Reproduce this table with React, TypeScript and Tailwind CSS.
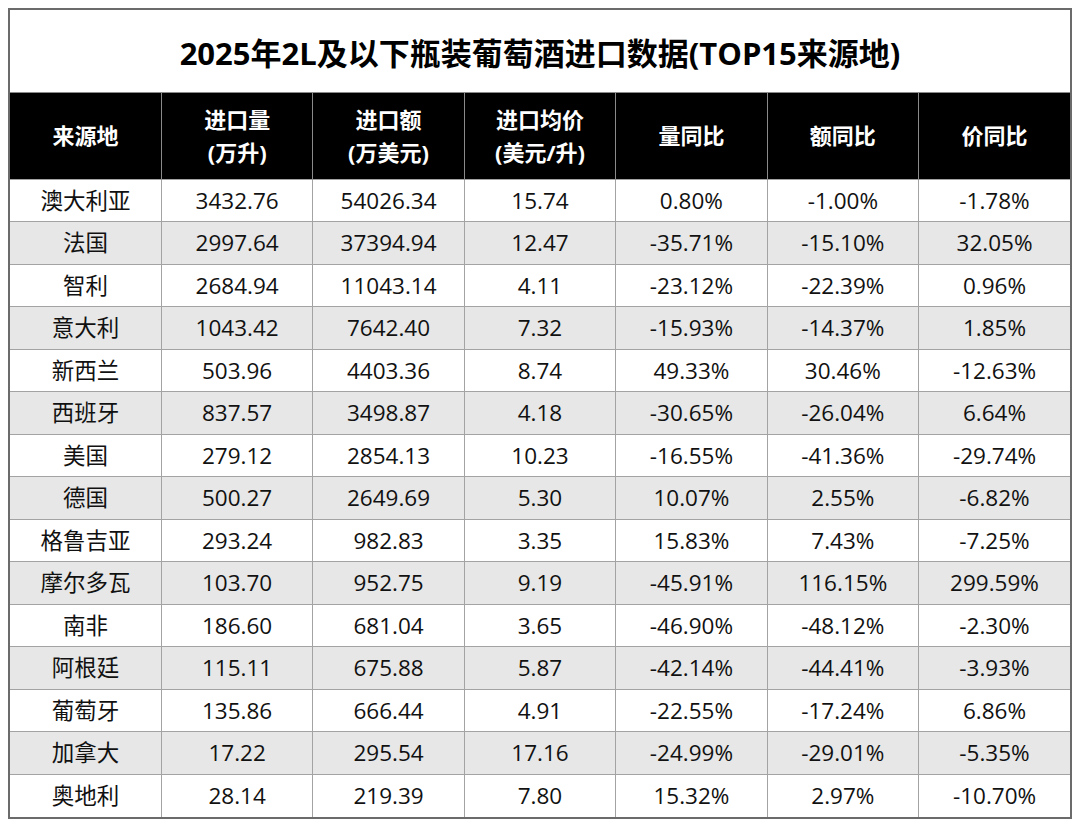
const headers: string[][] = [
  ["来源地"],
  ["进口量", "(万升)"],
  ["进口额", "(万美元)"],
  ["进口均价", "(美元/升)"],
  ["量同比"],
  ["额同比"],
  ["价同比"],
];

const rows: string[][] = [
  ["澳大利亚", "3432.76", "54026.34", "15.74", "0.80%", "-1.00%", "-1.78%"],
  ["法国", "2997.64", "37394.94", "12.47", "-35.71%", "-15.10%", "32.05%"],
  ["智利", "2684.94", "11043.14", "4.11", "-23.12%", "-22.39%", "0.96%"],
  ["意大利", "1043.42", "7642.40", "7.32", "-15.93%", "-14.37%", "1.85%"],
  ["新西兰", "503.96", "4403.36", "8.74", "49.33%", "30.46%", "-12.63%"],
  ["西班牙", "837.57", "3498.87", "4.18", "-30.65%", "-26.04%", "6.64%"],
  ["美国", "279.12", "2854.13", "10.23", "-16.55%", "-41.36%", "-29.74%"],
  ["德国", "500.27", "2649.69", "5.30", "10.07%", "2.55%", "-6.82%"],
  ["格鲁吉亚", "293.24", "982.83", "3.35", "15.83%", "7.43%", "-7.25%"],
  ["摩尔多瓦", "103.70", "952.75", "9.19", "-45.91%", "116.15%", "299.59%"],
  ["南非", "186.60", "681.04", "3.65", "-46.90%", "-48.12%", "-2.30%"],
  ["阿根廷", "115.11", "675.88", "5.87", "-42.14%", "-44.41%", "-3.93%"],
  ["葡萄牙", "135.86", "666.44", "4.91", "-22.55%", "-17.24%", "6.86%"],
  ["加拿大", "17.22", "295.54", "17.16", "-24.99%", "-29.01%", "-5.35%"],
  ["奥地利", "28.14", "219.39", "7.80", "15.32%", "2.97%", "-10.70%"],
];

export default function App() {
  return (
    <div className="h-[828px] w-[1080px] bg-white pl-2 pt-2 font-['Open_Sans','Noto_Sans_CJK_SC',sans-serif] text-[#111]">
      <div className="w-[1064px] border-2 border-[#6b6b6b]">
        <div className="flex h-[83px] items-center justify-center border-b border-[#8a8a8a] pt-1 text-[31px] font-bold text-black">
          2025年2L及以下瓶装葡萄酒进口数据(TOP15来源地)
        </div>
        <table className="w-full table-fixed border-collapse">
          <thead>
            <tr className="h-[86px] bg-black text-white">
              {headers.map((h, i) => (
                <th
                  key={i}
                  className="border-l border-[#8a8a8a] text-[22px] leading-[33px] font-bold first:border-l-0"
                >
                  {h.map((line) => (
                    <div key={line}>{line}</div>
                  ))}
                </th>
              ))}
            </tr>
          </thead>
          <tbody>
            {rows.map((row, r) => (
              <tr
                key={row[0]}
                className={`h-[42.5px] ${r % 2 === 1 ? "bg-[#e7e7e7]" : "bg-white"}`}
              >
                {row.map((cell, c) => (
                  <td
                    key={c}
                    className="border-t border-l border-[#a3a3a3] pt-[1px] text-center text-[22.5px] leading-none first:border-l-0"
                  >
                    {cell}
                  </td>
                ))}
              </tr>
            ))}
          </tbody>
        </table>
      </div>
    </div>
  );
}
